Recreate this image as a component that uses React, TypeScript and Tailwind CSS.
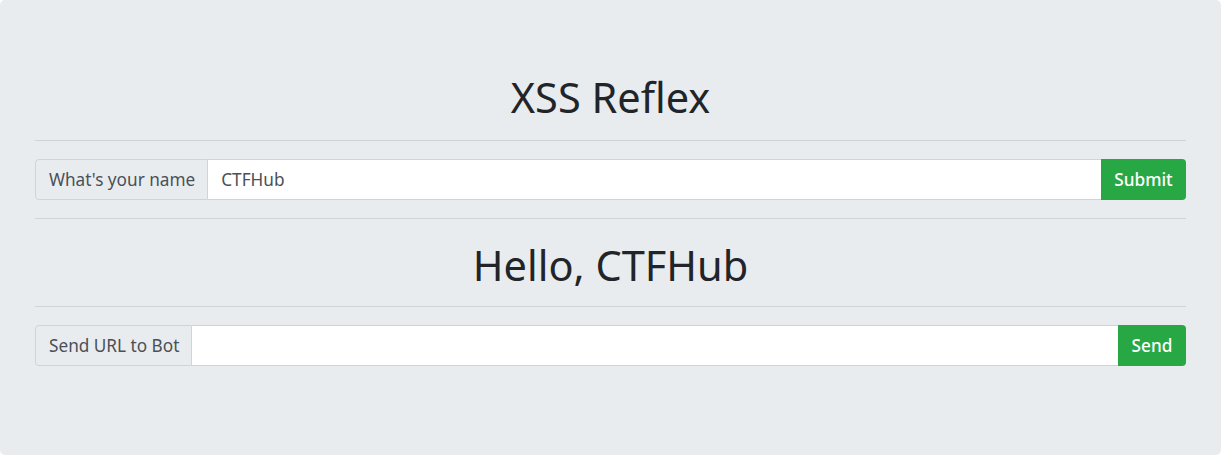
export default function App() {
  const font = { fontFamily: '"Noto Sans", "Open Sans", sans-serif' };
  return (
    <div className="w-[1222px] h-[456px] bg-white" style={font}>
      <div className="h-[455px] w-[1221px] bg-[#e9ecef] rounded-[5px] px-[35px] pt-[72px]">
        <h1 className="text-center text-[41.5px] leading-[50px] text-[#212529]">XSS Reflex</h1>
        <hr className="mt-[18px] border-t border-[#d1d3d6]" />
        <form className="mt-[18px] flex h-[41px] text-[17.2px]">
          <span className="flex items-center pl-[13px] pr-[12px] bg-[#e9ecef] border border-[#ced4da] rounded-l-[4px] text-[#495057]">
            What's your name
          </span>
          <input
            className="flex-1 min-w-0 bg-white border-y border-[#ced4da] px-[13px] text-[#495057] outline-none"
            defaultValue="CTFHub"
          />
          <button className="w-[85px] bg-[#28a745] text-white font-medium rounded-r-[4px]">Submit</button>
        </form>
        <hr className="mt-[18px] border-t border-[#d1d3d6]" />
        <h2 className="mt-[21px] text-center text-[41.5px] leading-[50px] text-[#212529]">Hello, CTFHub</h2>
        <hr className="mt-[16px] border-t border-[#d1d3d6]" />
        <form className="mt-[18px] flex h-[41px] text-[17.2px]">
          <span className="flex items-center pl-[13px] pr-[12px] bg-[#e9ecef] border border-[#ced4da] rounded-l-[4px] text-[#495057]">
            Send URL to Bot
          </span>
          <input className="flex-1 min-w-0 bg-white border-y border-[#ced4da] px-[13px] text-[#495057] outline-none" />
          <button className="w-[68px] bg-[#28a745] text-white font-medium rounded-r-[4px]">Send</button>
        </form>
      </div>
    </div>
  );
}
